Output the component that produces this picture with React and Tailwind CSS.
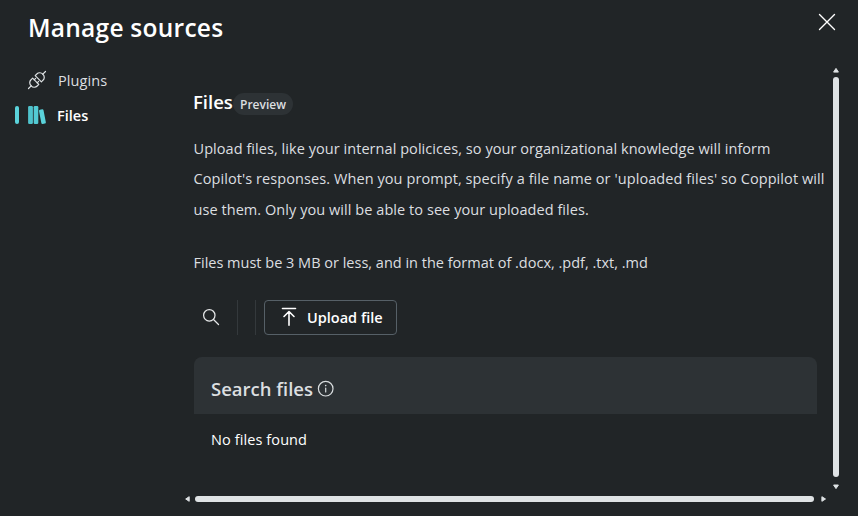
function PlugIcon() {
  return (
    <svg className="-mt-[2px] h-5 w-5" viewBox="0 0 20 20" fill="none" stroke="#dfe3e5" strokeWidth="1.2" strokeLinecap="round" strokeLinejoin="round">
      <path d="M1.5 18.5 4.2 15.8M15.8 4.2 18.5 1.5" />
      <path d="M5.6 8.2 11.8 14.4 10.2 16A4 4 0 0 1 4.2 15.8 4 4 0 0 1 4 9.8Z" />
      <path d="M8.2 5.6 14.4 11.8 16 10.2A4 4 0 0 0 15.8 4.2 4 4 0 0 0 9.8 4Z" />
      <path d="M7.2 9.8 8.6 8.4M10.2 12.8 11.6 11.4" />
    </svg>
  );
}

function LibraryIcon() {
  return (
    <svg className="h-5 w-5" viewBox="0 0 20 20">
      <rect x="1.1" y="1" width="4.8" height="18" rx="1.2" fill="#4fc3cc" />
      <rect x="6.7" y="1" width="4.6" height="18" rx="1.2" fill="#53cbd4" />
      <rect x="13.1" y="4.3" width="4.6" height="14.6" rx="1.2" fill="#5ad2da" transform="rotate(-11 15.4 11.5)" />
    </svg>
  );
}

function SearchIcon() {
  return (
    <svg className="h-[18px] w-[18px]" viewBox="0 0 18 18" fill="none" stroke="#e6e8e9" strokeWidth="1.25" strokeLinecap="round">
      <circle cx="7.3" cy="7.3" r="5.7" />
      <path d="m11.5 11.5 5 5" />
    </svg>
  );
}

function UploadIcon() {
  return (
    <svg className="h-5 w-4" viewBox="0 0 16 20" fill="none" stroke="#fff" strokeWidth="1.6" strokeLinecap="round" strokeLinejoin="round">
      <path d="M1.5 1.5h13M8 18.2V4.7M3 9.5l5-5 5 5" />
    </svg>
  );
}

function InfoIcon() {
  return (
    <svg className="h-[18px] w-[18px]" viewBox="0 0 18 18" fill="none" stroke="#d8dcde" strokeWidth="1.2">
      <circle cx="8.7" cy="8.7" r="7.3" />
      <path d="M8.7 8v4" strokeLinecap="round" />
      <circle cx="8.7" cy="5.6" r=".8" fill="#d8dcde" stroke="none" />
    </svg>
  );
}

function Arrow({ d, className }) {
  return (
    <svg className={className} viewBox="0 0 6 6" fill="#dfe3e5" stroke="#dfe3e5" strokeLinejoin="round">
      <path d={d} />
    </svg>
  );
}

export default function App() {
  return (
    <div className="flex h-[516px] w-[858px] flex-col overflow-hidden bg-[#212527] font-['Open_Sans','Noto_Sans',sans-serif] text-[#dcdfe0]">
      <header className="flex h-16 shrink-0 items-start justify-between pl-[28px] pr-[22px] pt-[11px]">
        <h1 className="whitespace-nowrap text-[24.5px] font-semibold leading-[34px] tracking-[0.25px] text-white">Manage sources</h1>
        <svg className="mt-[2px] h-[18px] w-[18px]" viewBox="0 0 18 18" stroke="#fff" strokeWidth="1.4" strokeLinecap="round">
          <path d="m1.5 1.5 15 15m0-15-15 15" />
        </svg>
      </header>
      <div className="flex min-h-0 flex-1">
        <nav className="w-[184px] shrink-0 text-[14.5px]">
          <a className="flex h-[33px] items-center pl-[27px]">
            <PlugIcon />
            <span className="ml-[11px] tracking-[0.1px]">Plugins</span>
          </a>
          <a className="flex h-9 items-center pl-[15px] font-semibold text-white">
            <span className="h-[18px] w-1 rounded-full bg-[#5ad2da]" />
            <span className="ml-2"><LibraryIcon /></span>
            <span className="ml-[10px] pt-[2px]">Files</span>
          </a>
        </nav>
        <div className="flex min-w-0 flex-1 flex-col">
          <div className="flex h-[426px]">
            <main className="w-[646px] shrink-0 pl-[10px] pt-[25px]">
              <div className="-ml-px flex h-7 items-center">
                <h2 className="w-10 whitespace-nowrap pb-[3px] text-[18.5px] font-semibold text-white">Files</h2>
                <span className="mt-[2px] flex h-[22px] w-[60px] items-center justify-center rounded-full bg-[#2d3235] pt-px text-[12px] font-semibold">Preview</span>
              </div>
              <p className="-ml-[0.5px] mt-[17px] whitespace-nowrap text-[14.5px]">
                <span className="block leading-[30px] tracking-[0.055px]">Upload files, like your internal policices, so your organizational knowledge will inform</span>
                <span className="block leading-[30px] tracking-[0.08px]">Copilot's responses. When you prompt, specify a file name or 'uploaded files' so Coppilot will</span>
                <span className="block pt-px leading-[30px] tracking-[0.06px]">use them. Only you will be able to see your uploaded files.</span>
              </p>
              <p className="-ml-[0.5px] mt-[22.5px] whitespace-nowrap text-[14.5px] leading-[30px]">Files must be 3 MB or less, and in the format of .docx, .pdf, .txt, .md</p>
              <div className="mt-[22px] flex h-[35px] items-center">
                <span className="ml-2"><SearchIcon /></span>
                <span className="ml-[17px] h-full w-px bg-[#34393c]" />
                <span className="ml-[17px] h-full w-px bg-[#34393c]" />
                <button className="ml-2 flex h-[35px] w-[133px] items-center rounded border border-[#566067] pl-4 text-[14.5px] font-semibold text-white">
                  <UploadIcon />
                  <span className="ml-[10px] whitespace-nowrap pt-[2px]">Upload file</span>
                </button>
              </div>
              <section className="mt-[22px] w-[623px]">
                <div className="flex h-[57px] items-center rounded-t-lg bg-[#2d3235] pl-[17px] pt-[7px]">
                  <h3 className="w-[106px] whitespace-nowrap text-[18.5px] font-semibold">Search files</h3>
                  <InfoIcon />
                </div>
                <p className="pl-[17px] pt-[15px] text-[14.5px] leading-[22px] tracking-[0.1px] text-white">No files found</p>
              </section>
            </main>
            <div className="flex w-3 flex-col items-center pt-[3px]">
              <Arrow className="h-[6px] w-[6px]" d="M.6 5.1h4.8L3 1.4Z" />
              <span className="mt-1 h-[400px] w-[6px] rounded-full bg-[#dfe3e5]" />
              <Arrow className="mt-[7px] h-[6px] w-[6px]" d="M.6 1h4.8L3 4.6Z" />
            </div>
          </div>
          <div className="mt-[6px] flex h-[6px] items-center">
            <Arrow className="h-[6px] w-[6px]" d="M5.2 .7v4.6L1.7 3Z" />
            <span className="ml-[5px] h-[6px] w-[619px] rounded-full bg-[#dfe3e5]" />
            <Arrow className="ml-[7px] h-[6px] w-[6px]" d="M.9 .7v4.6L4.5 3Z" />
          </div>
        </div>
      </div>
    </div>
  );
}
